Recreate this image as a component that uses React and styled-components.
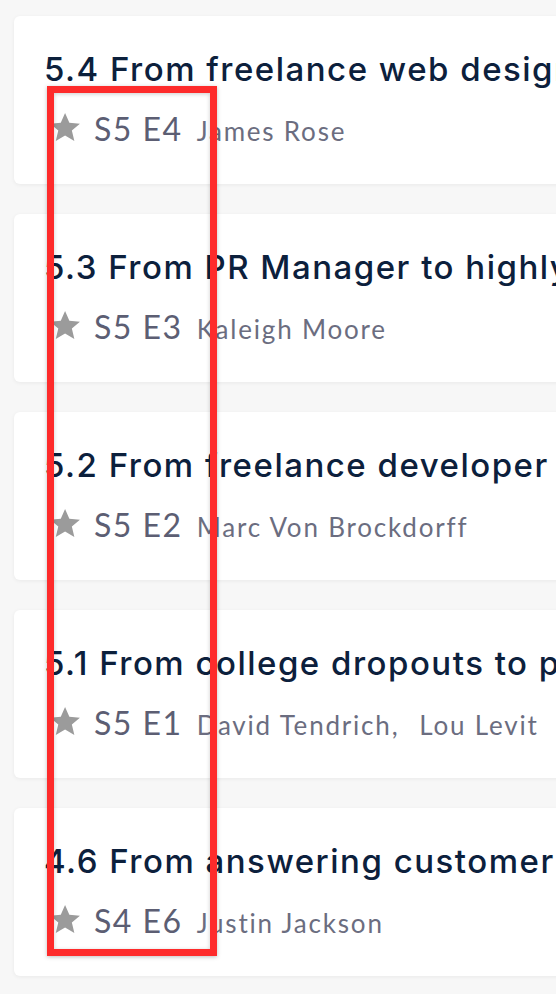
import React from "react";
import styled, { createGlobalStyle } from "styled-components";

const GlobalStyle = createGlobalStyle`
  html, body {
    margin: 0;
    padding: 0;
    background: #f7f7f7;
    overflow: hidden;
  }
`;

const Page = styled.div`
  position: relative;
  width: 556px;
  height: 994px;
  overflow: hidden;
  background: #f7f7f7;
`;

const List = styled.div`
  display: flex;
  flex-direction: column;
  gap: 30px;
  padding: 16px 0 0 14px;
`;

const Card = styled.div`
  width: 800px;
  height: 168px;
  box-sizing: border-box;
  padding: 37px 30px 0 30px;
  background: #fff;
  border-radius: 6px;
  box-shadow: 0 1px 4px rgba(0, 0, 0, 0.06);
  display: flex;
  flex-direction: column;
  gap: 27px;
`;

const Title = styled.div`
  font-family: Inter, "Noto Sans", sans-serif;
  font-size: 33px;
  font-weight: 500;
  letter-spacing: 1.5px;
  color: #0c203c;
  white-space: nowrap;
  line-height: 1;
`;

const Meta = styled.div`
  display: flex;
  align-items: baseline;
  height: 32px;
  line-height: 32px;
  padding-left: 6px;
  white-space: nowrap;
  font-family: Lato, "Noto Sans", sans-serif;
`;

const StarIcon = styled.svg`
  width: 30px;
  height: 28px;
  fill: #9b9b9b;
  margin-right: 14px;
`;

const Episode = styled.span`
  font-size: 32px;
  letter-spacing: 1.5px;
  color: #5c5e73;
  margin-right: 14px;
`;

const Author = styled.span`
  font-size: 26px;
  letter-spacing: 1.8px;
  color: #6b6d80;
  & + & {
    margin-left: 20px;
  }
`;

const Highlight = styled.div`
  position: absolute;
  left: 47px;
  top: 86px;
  width: 170px;
  height: 870px;
  box-sizing: border-box;
  border: 7px solid #fe2b2b;
  box-shadow: 0 1px 4px rgba(0, 0, 0, 0.25), inset 0 1px 4px rgba(0, 0, 0, 0.2);
  pointer-events: none;
`;

const Star = () => (
  <StarIcon viewBox="1.2 1.5 21.5 20.2">
    <path d="M12 1.5l3.1 7.1 7.6.6-5.8 5 1.8 7.5L12 17.8l-6.7 3.9 1.8-7.5-5.8-5 7.6-.6z" />
  </StarIcon>
);

const episodes = [
  { title: "5.4 From freelance web designer to", code: "S5 E4", authors: ["James Rose"] },
  { title: "5.3 From PR Manager to highly paid", code: "S5 E3", authors: ["Kaleigh Moore"] },
  { title: "5.2 From freelance developer to", code: "S5 E2", authors: ["Marc Von Brockdorff"] },
  { title: "5.1 From college dropouts to profitable", code: "S5 E1", authors: ["David Tendrich,", "Lou Levit"] },
  { title: "4.6 From answering customer emails", code: "S4 E6", authors: ["Justin Jackson"] },
];

export default function App() {
  return (
    <Page>
      <GlobalStyle />
      <List>
        {episodes.map((ep) => (
          <Card key={ep.code}>
            <Title>{ep.title}</Title>
            <Meta>
              <Star />
              <Episode>{ep.code}</Episode>
              {ep.authors.map((a) => (
                <Author key={a}>{a}</Author>
              ))}
            </Meta>
          </Card>
        ))}
      </List>
      <Highlight />
    </Page>
  );
}
